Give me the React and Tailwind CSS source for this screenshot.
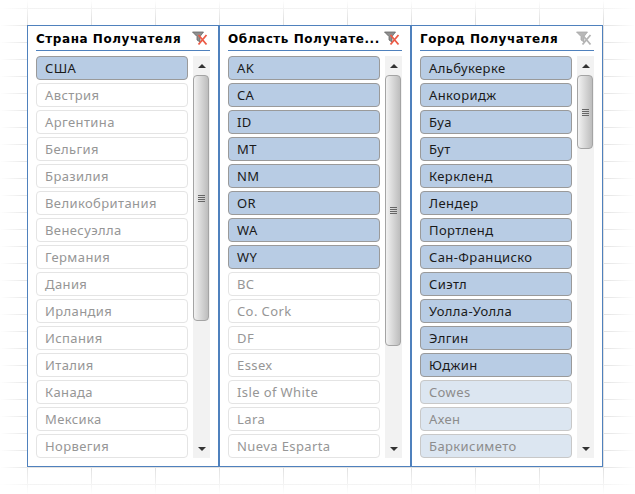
const panels = [
  {
    title: 'Страна Получателя',
    active: true,
    thumb: 'h-[246px]',
    items: [
      ['США', 'on'], ['Австрия'], ['Аргентина'], ['Бельгия'], ['Бразилия'],
      ['Великобритания'], ['Венесуэлла'], ['Германия'], ['Дания'], ['Ирландия'],
      ['Испания'], ['Италия'], ['Канада'], ['Мексика'], ['Норвегия'],
    ],
  },
  {
    title: 'Область Получате...',
    active: true,
    thumb: 'h-[271px]',
    items: [
      ['AK', 'on'], ['CA', 'on'], ['ID', 'on'], ['MT', 'on'], ['NM', 'on'],
      ['OR', 'on'], ['WA', 'on'], ['WY', 'on'], ['BC'], ['Co. Cork'],
      ['DF'], ['Essex'], ['Isle of White'], ['Lara'], ['Nueva Esparta'],
    ],
  },
  {
    title: 'Город Получателя',
    active: false,
    thumb: 'h-[74px]',
    items: [
      ['Альбукерке', 'on'], ['Анкоридж', 'on'], ['Буа', 'on'], ['Бут', 'on'], ['Керкленд', 'on'],
      ['Лендер', 'on'], ['Портленд', 'on'], ['Сан-Франциско', 'on'], ['Сиэтл', 'on'], ['Уолла-Уолла', 'on'],
      ['Элгин', 'on'], ['Юджин', 'on'], ['Cowes', 'dim'], ['Ахен', 'dim'], ['Баркисимето', 'dim'],
    ],
  },
];

const itemStyles = {
  on: 'bg-[#b8cce4] border-[#9a9a9a] text-[#1a1a1a]',
  dim: 'bg-[#dce6f1] border-[#c8c8c8] text-[#8c8c8c]',
  off: 'bg-white border-[#e4e4e4] text-[#969696]',
};

function FilterIcon({ active }) {
  return (
    <svg width="16" height="15" viewBox="0 0 16 15" className="shrink-0">
      <path d="M0.5 1h11L8 5.5V11L5 9V5.5z" fill={active ? '#8f8f8f' : '#b8b8b8'} stroke={active ? '#666' : '#a8a8a8'} strokeWidth="0.8" />
      <path d="M6.5 4l8 9.5M14.5 4l-8 9.5" stroke={active ? '#ec5a45' : '#b4b4b4'} strokeWidth="1.8" fill="none" />
    </svg>
  );
}

function Scrollbar({ thumb }) {
  return (
    <div className="w-[17px] bg-[#f2f2f2] flex flex-col items-start">
      <div className="h-[19px] w-full flex items-center justify-center shrink-0">
        <div className="w-0 h-0 border-x-[4px] border-x-transparent border-b-[4px] border-b-[#333]" />
      </div>
      <div className={`${thumb} w-[16px] border border-[#a4a4a4] rounded-sm bg-gradient-to-r from-[#f2f2f2] to-[#bdbdbd] flex items-center justify-center`}>
        <div className="w-[7px] flex flex-col gap-px">
          <div className="h-px bg-[#666]" />
          <div className="h-px bg-[#666]" />
          <div className="h-px bg-[#666]" />
          <div className="h-px bg-[#666]" />
        </div>
      </div>
      <div className="flex-1" />
      <div className="h-[19px] w-full flex items-center justify-center shrink-0">
        <div className="w-0 h-0 border-x-[4px] border-x-transparent border-t-[4px] border-t-[#333]" />
      </div>
    </div>
  );
}

function Slicer({ panel }) {
  return (
    <div className="w-[192px] h-[442px] bg-white border border-[#4f81bd] px-[8px]">
      <div className="h-[25px] flex items-center justify-between border-b border-[#4f81bd] pr-[2px]">
        <span className="pt-px text-[12px] font-['DejaVu_Sans',sans-serif] font-bold tracking-[0.55px] text-black whitespace-nowrap">{panel.title}</span>
        <FilterIcon active={panel.active} />
      </div>
      <div className="flex gap-[5px] mt-[5px]">
        <div className="w-[152px] flex flex-col gap-[3px]">
          {panel.items.map(([label, state]) => (
            <div key={label} className={`h-[24px] border rounded-[4px] pl-[8px] pt-px flex items-center text-[13px] tracking-[0.4px] ${itemStyles[state || 'off']}`}>
              {label}
            </div>
          ))}
        </div>
        <Scrollbar thumb={panel.thumb} />
      </div>
    </div>
  );
}

export default function App() {
  return (
    <div className="relative w-[635px] h-[494px] overflow-hidden bg-white font-['Noto_Sans',sans-serif]">
      <div className="absolute inset-0 bg-[linear-gradient(to_right,#e2e2e2_1px,transparent_1px),linear-gradient(to_bottom,#e2e2e2_1px,transparent_1px)] bg-[size:64px_17px] bg-[position:27px_8px]" />
      <div className="absolute inset-0 bg-[linear-gradient(to_right,white,transparent_5%,transparent_95%,white),linear-gradient(to_bottom,white,transparent_4%,transparent_95%,white)]" />
      <div className="relative flex pl-[27px] pt-[25px]">
        {panels.map((panel) => (
          <Slicer key={panel.title} panel={panel} />
        ))}
      </div>
    </div>
  );
}
